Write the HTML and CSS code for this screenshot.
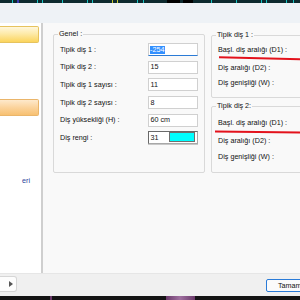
FILE: index.html
```html
<!DOCTYPE html>
<html lang="tr">
<head>
<meta charset="utf-8">
<title>Diş ayarları</title>
<link rel="stylesheet" href="styles.css">
</head>
<body>
<div class="screen">
  <div class="topstrip"></div>
  <div class="header"></div>
  <div class="middle">
    <aside class="sidebar">
      <div class="item item-yellow"></div>
      <div class="item item-orange"></div>
      <div class="sidebar-link">eri</div>
    </aside>
    <main class="main">
      <section class="group genel">
        <div class="group-title">Genel :</div>
        <div class="form">
          <label>Tipik diş 1 :</label>
          <div class="field focused"><span class="sel">-254</span></div>
          <label>Tipik diş 2 :</label>
          <div class="field">15</div>
          <label>Tipik diş 1 sayısı :</label>
          <div class="field">11</div>
          <label>Tipik diş 2 sayısı :</label>
          <div class="field">8</div>
          <label>Diş yüksekliği (H) :</label>
          <div class="field">60 cm</div>
          <label>Diş rengi :</label>
          <div class="picker"><span class="picker-num">31</span><span class="swatch"></span></div>
        </div>
      </section>
      <div class="right-col">
        <section class="group g1">
          <div class="group-title">Tipik diş 1 :</div>
          <div class="row r1">Başl. diş aralığı (D1) :</div>
          <div class="row r2">Diş aralığı (D2) :</div>
          <div class="row r3">Diş genişliği (W) :</div>
        </section>
        <section class="group g2">
          <div class="group-title">Tipik diş 2:</div>
          <div class="row r1">Başl. diş aralığı (D1) :</div>
          <div class="row r2">Diş aralığı (D2) :</div>
          <div class="row r3">Diş genişliği (W) :</div>
        </section>
      </div>
    </main>
  </div>
  <div class="footer">
    <div class="scroll-btn"><svg width="4" height="6" viewBox="0 0 4 6"><polygon points="0,0 4,3 0,6" fill="#555"/></svg></div>
    <div class="ok-btn">Tamam</div>
  </div>
  <div class="taskbar"></div>
  <svg class="annot" width="300" height="300" viewBox="0 0 300 300">
    <line x1="219" y1="57.3" x2="301" y2="59.3" stroke="#e3121c" stroke-width="2"/>
    <line x1="215" y1="131.5" x2="301" y2="132.6" stroke="#e3121c" stroke-width="2"/>
  </svg>
</div>
</body>
</html>
```

FILE: styles.css
```css
* { box-sizing: border-box; margin: 0; padding: 0; }
html, body { width: 300px; height: 300px; overflow: hidden; }
body {
  font-family: "Liberation Sans", Arial, sans-serif;
  font-size: 7.2px;
  color: #111;
  background: #f0f0f0;
}
.screen {
  position: relative;
  width: 300px;
  height: 300px;
  display: flex;
  flex-direction: column;
  overflow: hidden;
}
.topstrip {
  height: 3px;
  flex: none;
  background: linear-gradient(90deg,
    #0d2a2f 0, #0d2a2f 12px, #18c4c4 12px, #18c4c4 13px, #0d2a2f 13px,
    #0d2a2f 17px, #3a3ab0 17px, #3a3ab0 19px, #0d2a2f 19px,
    #0d2a2f 37px, #18c4c4 37px, #18c4c4 38px, #0d2a2f 38px,
    #0d2a2f 42px, #18c4c4 42px, #18c4c4 43px, #0d2a2f 43px,
    #0d2a2f 62px, #18c4c4 62px, #18c4c4 63px, #0d2a2f 63px,
    #0d2a2f 87px, #18c4c4 87px, #18c4c4 88px, #0d2a2f 88px,
    #0d2a2f 92px, #18c4c4 92px, #18c4c4 93px, #0d2a2f 93px,
    #0d2a2f 112px, #c8c830 112px, #c8c830 113px, #0d2a2f 113px,
    #0d2a2f 117px, #c8c830 117px, #c8c830 118px, #0d2a2f 118px,
    #0d2a2f 137px, #18c4c4 137px, #18c4c4 138px, #0d2a2f 138px,
    #0d2a2f 143px, #18c4c4 143px, #18c4c4 144px, #0d2a2f 144px,
    #0d2a2f 167px, #000 167px, #000 180px, #0d2a2f 180px,
    #0d2a2f 183px, #000 183px, #000 193px, #0d2a2f 193px,
    #0d2a2f 211px, #18c4c4 211px, #18c4c4 212px, #0d2a2f 212px,
    #0d2a2f 236px, #18c4c4 236px, #18c4c4 237px, #0d2a2f 237px,
    #0d2a2f 261px, #18c4c4 261px, #18c4c4 262px, #0d2a2f 262px,
    #0d2a2f 266px, #18c4c4 266px, #18c4c4 267px, #0d2a2f 267px,
    #0d2a2f 286px, #18c4c4 286px, #18c4c4 287px, #0d2a2f 287px,
    #0d2a2f 293px, #18c4c4 293px, #18c4c4 294px, #0d2a2f 294px);
}
.header { height: 20px; flex: none; background: #eef2f6; }
.middle { height: 250px; flex: none; display: flex; }

.sidebar {
  width: 43px;
  flex: none;
  background: #fff;
  border-right: 2px solid #cfcfcf;
  display: flex;
  flex-direction: column;
}
.item {
  width: 39px;
  height: 17px;
  border: 1px solid #e6c35e;
  border-left: none;
  border-radius: 0 2px 2px 0;
}
.item-yellow {
  margin-top: 3px;
  background: linear-gradient(#fff7dc, #fdeaa8 45%, #fbd45c);
}
.item-orange {
  margin-top: 56px;
  border-color: #eab56a;
  background: linear-gradient(#fee9cc, #fbd39c 50%, #f7c071);
}
.sidebar-link {
  margin-top: 60px;
  padding-left: 22px;
  line-height: 10px;
  color: #1f3f9a;
}

.main {
  flex: 1;
  min-width: 0;
  background: #f9f9f9;
  display: flex;
  align-items: flex-start;
  padding: 11px 0 0 10px;
}
.group {
  border: 1px solid #d9d9d9;
  border-radius: 2px;
  padding: 0 6px;
  display: flex;
  flex-direction: column;
  flex: none;
}
.group-title {
  align-self: flex-start;
  margin: -6px 0 0 -2px;
  padding: 0 1px;
  height: 10px;
  line-height: 10px;
  background: #f9f9f9;
}
.genel { width: 152px; height: 139px; }
.form {
  margin-top: 4px;
  display: grid;
  grid-template-columns: 1fr 50px;
  grid-auto-rows: 13px;
  row-gap: 4.7px;
}
.form label { align-self: center; line-height: 10px; }
.field {
  background: #fff;
  border: 1px solid #d0d0d0;
  padding-left: 1.5px;
  display: flex;
  align-items: center;
  line-height: 10px;
}
.field.focused { border-bottom: 1.5px solid #2b7bd6; padding-left: 0.5px; }
.sel { background: #3390ff; color: #fff; padding: 0 0.5px; line-height: 8px; }
.picker {
  display: flex;
  align-items: stretch;
  background: #fff;
  border: 1px solid #a8a8a8;
  border-top-color: #696969;
  border-left-color: #696969;
  box-shadow: 0 1px 0 #c8c8c8;
}
.picker-num { flex: 1; padding-left: 1.5px; line-height: 11px; }
.swatch {
  width: 26px;
  margin: 0 2px 1px 0;
  background: #00ffff;
  border: 1px solid #6f6f6f;
}

.right-col {
  width: 110px;
  flex: none;
  margin: 1px 0 0 6px;
  display: flex;
  flex-direction: column;
  gap: 8px;
}
.g1 { height: 63px; }
.g2 { height: 67px; }
.row { line-height: 10px; height: 10px; }
.g1 .r1 { margin-top: 5px; }
.g1 .r2 { margin-top: 8px; }
.g1 .r3 { margin-top: 4.5px; }
.g2 .r1 { margin-top: 6.7px; }
.g2 .r2 { margin-top: 8px; }
.g2 .r3 { margin-top: 6px; }

.footer {
  height: 23px;
  flex: none;
  display: flex;
  align-items: flex-start;
  background: #f0f0f0;
  border-top: 1px solid #e6e6e6;
}
.scroll-btn {
  margin-top: 2px;
  width: 17px;
  height: 16px;
  flex: none;
  background: #fdfdfd;
  border: 1px solid #d6d6d6;
  border-left: none;
  border-radius: 0 3px 3px 0;
  display: flex;
  align-items: center;
  padding-left: 9px;
}
.ok-btn {
  margin: 5px -20px 0 auto;
  width: 54px;
  height: 13px;
  flex: none;
  border: 1px solid #2a7bd8;
  border-radius: 2px;
  background: #fbfbfb;
  padding-left: 11px;
  line-height: 11px;
}
.taskbar {
  height: 4px;
  flex: none;
  background: linear-gradient(90deg,
    #141414 0, #141414 50px, #6a3a6a 50px, #6a3a6a 52px, #141414 52px,
    #141414 166px, #6a3a6a 166px, #a070a0 180px, #6a3a6a 195px, #141414 195px);
}
.annot { position: absolute; left: 0; top: 0; pointer-events: none; }
```
